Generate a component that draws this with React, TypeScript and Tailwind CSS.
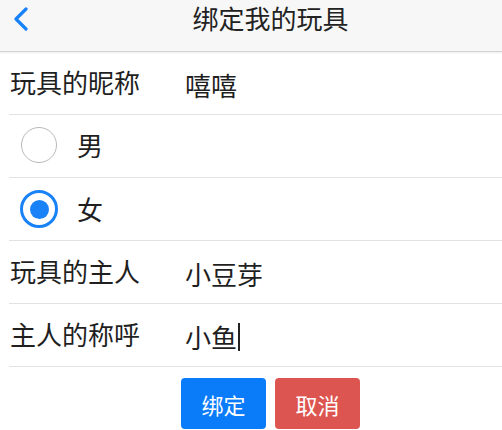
const FONT = { fontFamily: '"Noto Sans CJK SC", "Noto Sans", sans-serif' };

function Row({ label, value, cursor }: { label: string; value: string; cursor?: boolean }) {
  return (
    <div className="ml-[9px] h-[63px] flex items-center border-b border-[#e2e2e2]">
      <span className="w-[176px] pl-px -mt-[2px] text-[26px] leading-none text-[#1f1f1f]">{label}</span>
      <span className="flex items-center pt-[3px] text-[26px] leading-none text-[#1f1f1f]">
        {value}
        {cursor && <span className="ml-px inline-block w-[2px] h-[28px] bg-[#222]" />}
      </span>
    </div>
  );
}

function Radio({ label, checked }: { label: string; checked?: boolean }) {
  return (
    <div className="ml-[9px] h-[63px] flex items-center border-b border-[#e2e2e2]">
      <span
        className={
          checked
            ? 'ml-[11px] w-[38px] h-[38px] rounded-full border-[3px] border-[#1a82f7] flex items-center justify-center'
            : 'ml-[12px] -mt-[2px] w-[36px] h-[36px] rounded-full border-[1.5px] border-[#b8b8b8]'
        }
      >
        {checked && <span className="w-[19px] h-[19px] rounded-full bg-[#1a82f7]" />}
      </span>
      <span className={checked ? 'ml-[19px] text-[26px] leading-none text-[#1f1f1f]' : 'ml-[20px] -mt-[2px] text-[26px] leading-none text-[#1f1f1f]'}>
        {label}
      </span>
    </div>
  );
}

export default function App() {
  return (
    <div className="w-[502px] h-[430px] bg-white overflow-hidden" style={FONT}>
      <div className="relative h-[52px] bg-[#f7f7f7] border-b border-[#d4d4d4] shadow-[0_1px_2px_rgba(0,0,0,0.08)] flex items-start justify-center pt-[4px] pl-[39px]">
        <svg className="absolute left-[12px] top-[7px]" width="18" height="24" viewBox="0 0 18 24" fill="none">
          <path d="M14 2 L4 12 L14 22" stroke="#1a82f7" strokeWidth="3.2" strokeLinecap="round" strokeLinejoin="round" />
        </svg>
        <span className="text-[26px] leading-[28px] text-[#222]">绑定我的玩具</span>
      </div>

      <Row label="玩具的昵称" value="嘻嘻" />
      <Radio label="男" />
      <Radio label="女" checked />
      <Row label="玩具的主人" value="小豆芽" />
      <Row label="主人的称呼" value="小鱼" cursor />

      <div className="mt-[11px] flex justify-center gap-[9px] pl-[39px]">
        <button className="w-[85px] h-[51px] rounded-[4px] bg-[#0a7cfa] text-white text-[22px] leading-none">绑定</button>
        <button className="w-[85px] h-[51px] rounded-[4px] bg-[#dd5550] text-white text-[22px] leading-none">取消</button>
      </div>
    </div>
  );
}
